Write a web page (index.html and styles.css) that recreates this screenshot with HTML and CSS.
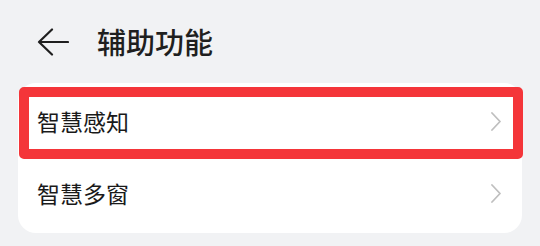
FILE: index.html
```html
<!doctype html>
<html lang="zh-CN">
  <head>
    <meta charset="utf-8">
    <title>辅助功能</title>
    <link rel="stylesheet" href="styles.css">
  </head>
  <body>
    <div class="header">
      <svg class="backIcon" width="32" height="28" viewBox="0 0 32 28">
        <path d="M15 1.5 L2 14 L15 26.5 M2 14 H31" fill="none" stroke="#1f1f1f" stroke-width="2.2" stroke-linecap="round" stroke-linejoin="round" />
      </svg>
      <div class="title">辅助功能</div>
    </div>

    <div class="card">
      <div class="row highlighted">
        <span class="label">智慧感知</span>
        <svg class="chevron" width="10" height="19" viewBox="0 0 10 19">
          <polyline points="1,1 9,9.5 1,18" fill="none" stroke="#bfbfbf" stroke-width="1.8" stroke-linecap="round" stroke-linejoin="round" />
        </svg>
      </div>
      <div class="row">
        <span class="label">智慧多窗</span>
        <svg class="chevron" width="10" height="19" viewBox="0 0 10 19">
          <polyline points="1,1 9,9.5 1,18" fill="none" stroke="#bfbfbf" stroke-width="1.8" stroke-linecap="round" stroke-linejoin="round" />
        </svg>
      </div>
    </div>
  </body>
</html>
```

FILE: styles.css
```css
body {
  margin: 0;
  background-color: #f1f2f4;
  font-family: "Noto Sans CJK SC", "Noto Sans", sans-serif;
  color: #1a1a1a;
}

.header {
  height: 83px;
  display: flex;
  align-items: center;
  padding-left: 37px;
  gap: 28px;
}

.backIcon {
  display: block;
}

.title {
  font-size: 29px;
  font-weight: 500;
  line-height: 1;
  color: #1f1f1f;
}

.card {
  margin: 0 18px;
  background-color: #ffffff;
  border-radius: 18px;
  padding: 4px 0 2px;
}

.row {
  height: 72px;
  display: flex;
  align-items: center;
  justify-content: space-between;
  padding: 0 21px 0 19px;
  position: relative;
}

.label {
  font-size: 23px;
  line-height: 1;
  position: relative;
  top: -2px;
}

.chevron {
  display: block;
  position: relative;
  top: -2px;
}

/* red annotation frame drawn over the first row */
.highlighted::after {
  content: "";
  position: absolute;
  top: 0;
  bottom: 0;
  left: 1px;
  right: -1px;
  border: 10px solid #f43539;
  border-radius: 5px;
}
```
